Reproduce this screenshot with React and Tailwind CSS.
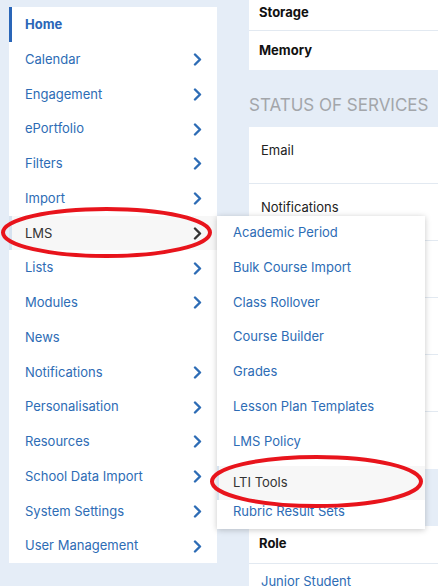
import React from 'react';

const menu = [
    { label: 'Home', active: true },
    { label: 'Calendar', sub: true },
    { label: 'Engagement', sub: true },
    { label: 'ePortfolio', sub: true },
    { label: 'Filters', sub: true },
    { label: 'Import', sub: true },
    { label: 'LMS', sub: true, hover: true },
    { label: 'Lists', sub: true },
    { label: 'Modules', sub: true },
    { label: 'News' },
    { label: 'Notifications', sub: true },
    { label: 'Personalisation', sub: true },
    { label: 'Resources', sub: true },
    { label: 'School Data Import', sub: true },
    { label: 'System Settings', sub: true },
    { label: 'User Management', sub: true },
];

const lmsItems = [
    'Academic Period',
    'Bulk Course Import',
    'Class Rollover',
    'Course Builder',
    'Grades',
    'Lesson Plan Templates',
    'LMS Policy',
];

const Chevron = ({ color }) => (
    <svg width="9" height="13" viewBox="0 0 9 13" fill="none">
        <polyline points="2,1.5 7,6.5 2,11.5" stroke={color} strokeWidth="2.4" strokeLinecap="round" strokeLinejoin="round" />
    </svg>
);

const LmsPopup = () => (
    <div className="absolute left-[205px] top-0 w-[208px] h-[313px] bg-white shadow-[0_1px_6px_rgba(0,0,0,0.22)] z-10 flex flex-col font-normal">
        {lmsItems.map(item => (
            <div key={item} className="h-[34.75px] shrink-0 flex items-center pl-[16px] text-[13px] text-[#2d6cb5]">
                {item}
            </div>
        ))}
        {/* hovered row sits a little lower */}
        <div className="mt-[7px] h-[34px] shrink-0 flex items-center pl-[16px] text-[13px] text-[#333] bg-[#f7f7f7] shadow-[inset_2px_0_0_#d7e3f0]">
            LTI Tools
        </div>
        <div className="flex-1 flex items-center pb-[5px] pl-[16px] text-[13px] text-[#2d6cb5]">
            Rubric Result Sets
        </div>
    </div>
);

const Sidebar = () => (
    <div className="ml-[9px] mt-[7px] w-[208px] h-[556px] bg-white flex flex-col">
        {menu.map(m => (
            <div
                key={m.label}
                className={
                    'relative h-[34.75px] shrink-0 flex items-center justify-between pl-[13px] pr-[15px] pt-[1px] text-[13px] ' +
                    (m.active
                        ? 'border-l-[3px] border-[#2a66b8] font-bold text-[#2a66b8]'
                        : m.hover
                            ? 'border-l-[3px] border-[#d7e3f0] bg-[#f7f7f7] text-[#333]'
                            : 'border-l-[3px] border-transparent text-[#2d6cb5]')
                }
            >
                <span>{m.label}</span>
                {m.sub && <Chevron color={m.hover ? '#333333' : '#2d6cb5'} />}
                {m.hover && <LmsPopup />}
            </div>
        ))}
    </div>
);

const Row = ({ h, children, bold, blue, border = true, top }) => (
    <div
        className={
            'px-[10px] text-[13px] flex ' +
            (top ? 'items-start pt-[14px] ' : 'items-center ') +
            (border ? 'border-b border-[#e2e9f1] ' : '') +
            (bold ? 'font-bold text-[#111] ' : blue ? 'text-[#2d6cb5] ' : 'text-[#222] ')
        }
        style={{ height: h }}
    >
        {children}
    </div>
);

const Main = () => (
    <div className="ml-[32px] flex-1 flex flex-col">
        <div className="bg-white">
            <Row h={31} bold><span className="-mt-[4px]">Storage</span></Row>
            <Row h={39} bold border={false}><span className="mt-[1px]">Memory</span></Row>
        </div>
        <div className="h-[57px] shrink-0 pt-[25px] text-[17px] leading-[20px] text-[#a3a6aa] whitespace-nowrap">
            STATUS OF SERVICES
        </div>
        <div className="bg-white">
            <Row h={56.5} top><span className="pl-[2px]">Email</span></Row>
            <Row h={57} top><span className="pl-[2px]">Notifications</span></Row>
            <Row h={57} top></Row>
            <Row h={57} top></Row>
            <Row h={57} top></Row>
            <Row h={57} top border={false}></Row>
        </div>
        <div className="h-[57px] shrink-0" />
        <div className="bg-white flex-1">
            <Row h={38} bold>Role</Row>
            <div className="pl-[12px] pt-[8px] text-[13px] text-[#2d6cb5]">Junior Student</div>
        </div>
    </div>
);

export default function App() {
    return (
        <div className="relative w-[438px] h-[586px] overflow-hidden bg-[#e5edf7] flex font-['Inter',sans-serif]">
            <Sidebar />
            <Main />
            <svg className="absolute inset-0 pointer-events-none z-20" width="438" height="586">
                <ellipse cx="106.5" cy="232.5" rx="103.5" ry="23.5" fill="none" stroke="#e8141c" strokeWidth="4" />
                <ellipse cx="316.5" cy="481.5" rx="104.5" ry="24.5" fill="none" stroke="#e8141c" strokeWidth="4" />
            </svg>
        </div>
    );
}
